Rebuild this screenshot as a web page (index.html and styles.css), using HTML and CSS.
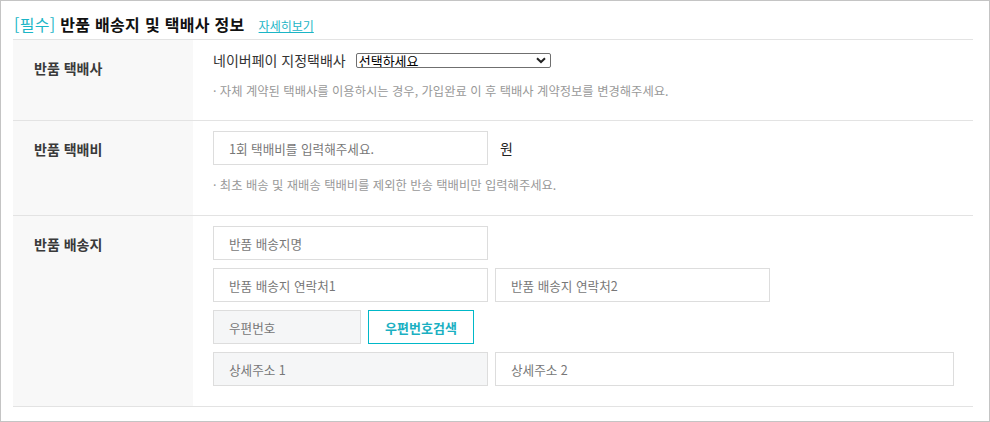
FILE: index.html
```html
<!DOCTYPE html>
<html lang="ko">
<head>
<meta charset="utf-8">
<title>반품 배송지 및 택배사 정보</title>
<link rel="stylesheet" href="styles.css">
</head>
<body>
<div class="panel">
  <div class="title">
    <h2 class="title-text"><span class="req">[필수]</span> 반품 배송지 및 택배사 정보</h2>
    <a class="more" href="#">자세히보기</a>
  </div>
  <div class="row">
    <div class="label">반품 택배사</div>
    <div class="content content-first">
      <div class="line">
        <span class="text">네이버페이 지정택배사</span>
        <div class="select-wrap">
          <select class="select"><option>선택하세요</option></select>
          <svg class="chev" width="10" height="7" viewBox="0 0 10 7"><path d="M1 1.2 L5 5 L9 1.2" fill="none" stroke="#222" stroke-width="2"/></svg>
        </div>
      </div>
      <p class="hint hint-1">· 자체 계약된 택배사를 이용하시는 경우, 가입완료 이 후 택배사 계약정보를 변경해주세요.</p>
    </div>
  </div>
  <div class="row">
    <div class="label">반품 택배비</div>
    <div class="content">
      <div class="line">
        <input class="input w275" type="text" placeholder="1회 택배비를 입력해주세요.">
        <span class="won">원</span>
      </div>
      <p class="hint hint-2">· 최초 배송 및 재배송 택배비를 제외한 반송 택배비만 입력해주세요.</p>
    </div>
  </div>
  <div class="row">
    <div class="label">반품 배송지</div>
    <div class="content stack">
      <div class="fields"><input class="input w275" type="text" placeholder="반품 배송지명"></div>
      <div class="fields">
        <input class="input w275" type="text" placeholder="반품 배송지 연락처1">
        <input class="input w275" type="text" placeholder="반품 배송지 연락처2">
      </div>
      <div class="fields">
        <input class="input w148 gray" type="text" placeholder="우편번호" readonly>
        <button class="btn" type="button">우편번호검색</button>
      </div>
      <div class="fields">
        <input class="input w275 gray" type="text" placeholder="상세주소 1" readonly>
        <input class="input w459" type="text" placeholder="상세주소 2">
      </div>
    </div>
  </div>
</div>
</body>
</html>
```

FILE: styles.css
```css
* { box-sizing: border-box; }
html, body { margin: 0; padding: 0; background: #fff; }
body {
  font-family: "Noto Sans CJK KR", "Noto Sans", sans-serif;
  color: #333;
}
.panel {
  width: 990px;
  height: 422px;
  border: 1px solid #c4c4c4;
  padding: 0 16px 0 12px;
}
.title {
  height: 39px;
  border-bottom: 1px solid #e3e3e3;
  display: flex;
  align-items: center;
  padding: 8px 0 0 1px;
}
.title-text {
  margin: 0;
  font-size: 16px;
  font-weight: 700;
  color: #111;
  line-height: 20px;
  letter-spacing: 0.3px;
}
.req { color: #1bb5c6; font-weight: 400; }
.more {
  margin-left: 14px;
  margin-top: 3px;
  font-size: 12px;
  color: #1bb5c6;
  text-decoration: underline;
  line-height: 16px;
}
.row {
  display: flex;
  border-bottom: 1px solid #e3e3e3;
}
.label {
  width: 180px;
  flex: none;
  background: #f8f8f8;
  padding: 18px 0 0 21px;
  font-size: 14px;
  font-weight: 700;
  line-height: 20px;
  color: #3a3a3a;
}
.content {
  flex: 1;
  padding: 10px 0 22px 20px;
}
.content-first { padding-bottom: 21px; }
.line {
  display: flex;
  align-items: center;
  min-height: 20px;
}
.text {
  font-size: 14px;
  line-height: 20px;
  color: #333;
}
.select-wrap {
  position: relative;
  margin-left: 10px;
  width: 195px;
  height: 15px;
}
.select {
  display: block;
  appearance: none;
  -webkit-appearance: none;
  width: 100%;
  height: 15px;
  border: 1px solid #6f6f6f;
  border-radius: 2px;
  background: #fff;
  font-family: inherit;
  font-size: 13px;
  line-height: 13px;
  padding: 0 2px;
  margin: 0;
  color: #000;
}
.chev {
  position: absolute;
  right: 5px;
  top: 4px;
  pointer-events: none;
}
.hint {
  margin: 13px 0 0;
  font-size: 12.3px;
  line-height: 16px;
  color: #999;
}
.hint-2 { margin-top: 12px; }
.input {
  display: block;
  height: 34px;
  border: 1px solid #ddd;
  padding: 0 15px;
  margin: 0;
  font-family: inherit;
  font-size: 12.6px;
  color: #333;
  background: #fff;
  outline: none;
}
.input::placeholder { color: #777; }
.input.gray { background: #f5f6f7; }
.w275 { width: 275px; }
.w148 { width: 148px; }
.w459 { width: 459px; }
.won {
  margin-left: 12px;
  font-size: 14px;
  color: #222;
  line-height: 20px;
}
.stack {
  display: flex;
  flex-direction: column;
  gap: 8px;
  padding-bottom: 20px;
}
.fields {
  display: flex;
  gap: 7px;
}
.btn {
  width: 106px;
  height: 34px;
  border: 1px solid #00b8c8;
  background: #fff;
  color: #1bb0c2;
  font-family: inherit;
  font-size: 13px;
  font-weight: 700;
  padding: 0;
  margin: 0;
}
```
